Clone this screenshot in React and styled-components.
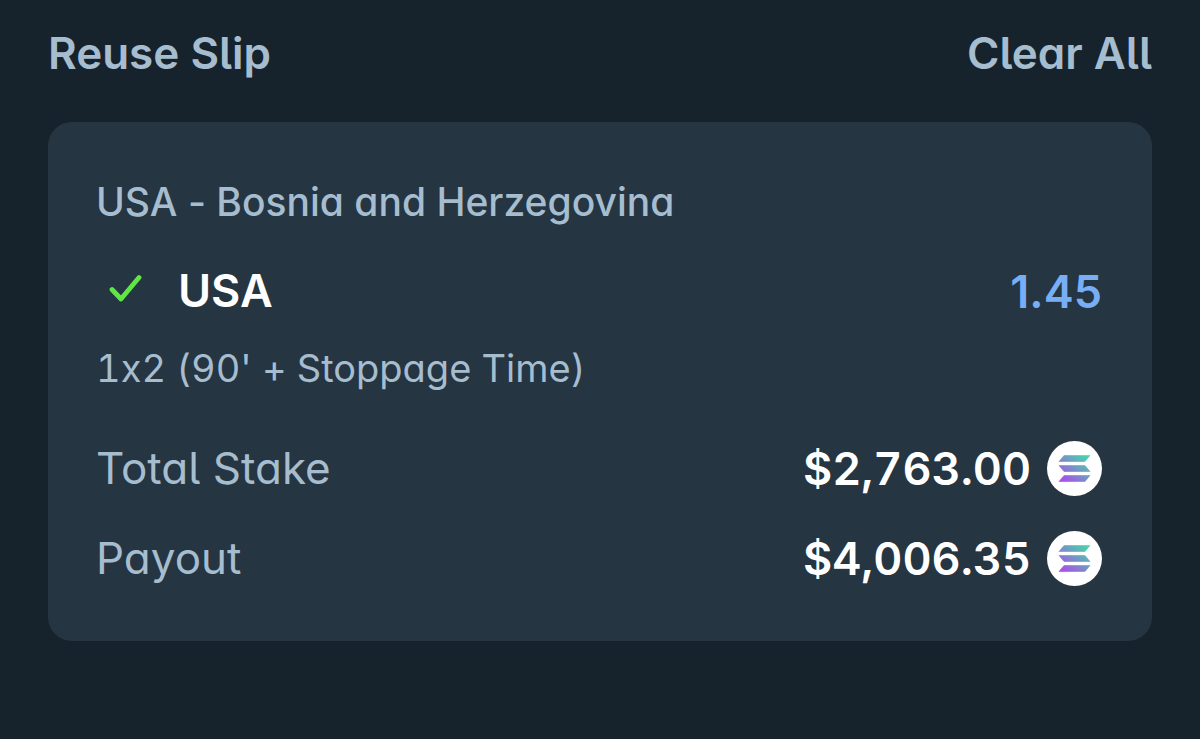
import React from 'react';
import styled, { createGlobalStyle } from 'styled-components';

const GlobalStyle = createGlobalStyle`
  * {
    box-sizing: border-box;
  }

  body {
    margin: 0;
    min-height: 100vh;
    background: #17232c;
    font-family: Inter, 'Open Sans', sans-serif;
    /* single-storey a, tailed l, and no x -> × between digits */
    font-feature-settings: 'cv11' 1, 'cv05' 1, 'calt' 0;
  }
`;

const Page = styled.main`
  padding: 24px 48px 48px;
`;

const Toolbar = styled.header`
  display: flex;
  justify-content: space-between;
  margin-bottom: 40px;
`;

const ToolbarButton = styled.button`
  padding: 0;
  border: 0;
  background: none;
  color: #a6bdcf;
  font-family: inherit;
  font-feature-settings: inherit;
  font-size: 44px;
  font-weight: 600;
  line-height: 58px;
  cursor: pointer;
`;

const Card = styled.section`
  padding: 52px 50px 38px 48px;
  border-radius: 24px;
  background: #253541;
`;

const Row = styled.div`
  display: flex;
  align-items: center;
  justify-content: space-between;
`;

const Fixture = styled.h2`
  margin: 0 0 16px;
  color: #a6bdcf;
  font-size: 39px;
  font-weight: 500;
  line-height: 56px;
`;

const Pick = styled.div`
  display: flex;
  align-items: center;
  gap: 36px;
  padding-left: 12px;
  color: #fff;
  font-size: 45px;
  font-weight: 600;
  line-height: 90px;
`;

const Odds = styled.span`
  color: #78aef5;
  font-size: 45px;
  font-weight: 600;
`;

const Market = styled.p`
  margin: 4px 0 27px;
  color: #a6bdcf;
  font-size: 38px;
  font-weight: 400;
  line-height: 56px;
  font-variant-numeric: tabular-nums;
`;

const Totals = styled.dl`
  margin: 0;
`;

const Label = styled.dt`
  color: #a6bdcf;
  font-size: 44px;
  font-weight: 400;
  line-height: 90px;
`;

const Amount = styled.dd`
  display: flex;
  align-items: center;
  gap: 16px;
  margin: 0;
  color: #fff;
  font-size: 45px;
  font-weight: 600;
  font-variant-numeric: tabular-nums;
`;

const CheckIcon = () => (
  <svg width="34" height="40" viewBox="0 0 34 40" fill="none" aria-hidden="true">
    <path d="M4 18.5L13 28L31 6.5" stroke="#5fe645" strokeWidth="4.8" strokeLinecap="round" strokeLinejoin="round" />
  </svg>
);

const SolanaIcon = ({ id }) => (
  <svg width="55" height="55" viewBox="0 0 55 55" role="img" aria-label="SOL">
    <defs>
      <linearGradient id={id} x1="15" y1="43" x2="40" y2="12" gradientUnits="userSpaceOnUse">
        <stop offset="0" stopColor="#b640f0" />
        <stop offset="0.5" stopColor="#7593c8" />
        <stop offset="1" stopColor="#3fdfa8" />
      </linearGradient>
    </defs>
    <circle cx="27.5" cy="27.5" r="27.5" fill="#fff" />
    <path
      fill={`url(#${id})`}
      stroke={`url(#${id})`}
      strokeWidth="0.6"
      strokeLinejoin="round"
      d="M17 14.5H43L38 20.5H12ZM12 24.5H38L43 30.5H17ZM17 34.5H43L38 40.5H12Z"
    />
  </svg>
);

const totals = [
  { id: 'stake', label: 'Total Stake', amount: '$2,763.00' },
  { id: 'payout', label: 'Payout', amount: '$4,006.35' },
];

const App = () => (
  <Page>
    <GlobalStyle />
    <Toolbar>
      <ToolbarButton type="button">Reuse Slip</ToolbarButton>
      <ToolbarButton type="button">Clear All</ToolbarButton>
    </Toolbar>
    <Card>
      <Fixture>USA - Bosnia and Herzegovina</Fixture>
      <Row>
        <Pick>
          <CheckIcon />
          USA
        </Pick>
        <Odds>1.45</Odds>
      </Row>
      <Market>1x2 (90' + Stoppage Time)</Market>
      <Totals>
        {totals.map(({ id, label, amount }) => (
          <Row key={id}>
            <Label>{label}</Label>
            <Amount>
              {amount}
              <SolanaIcon id={`sol-${id}`} />
            </Amount>
          </Row>
        ))}
      </Totals>
    </Card>
  </Page>
);

export default App;
